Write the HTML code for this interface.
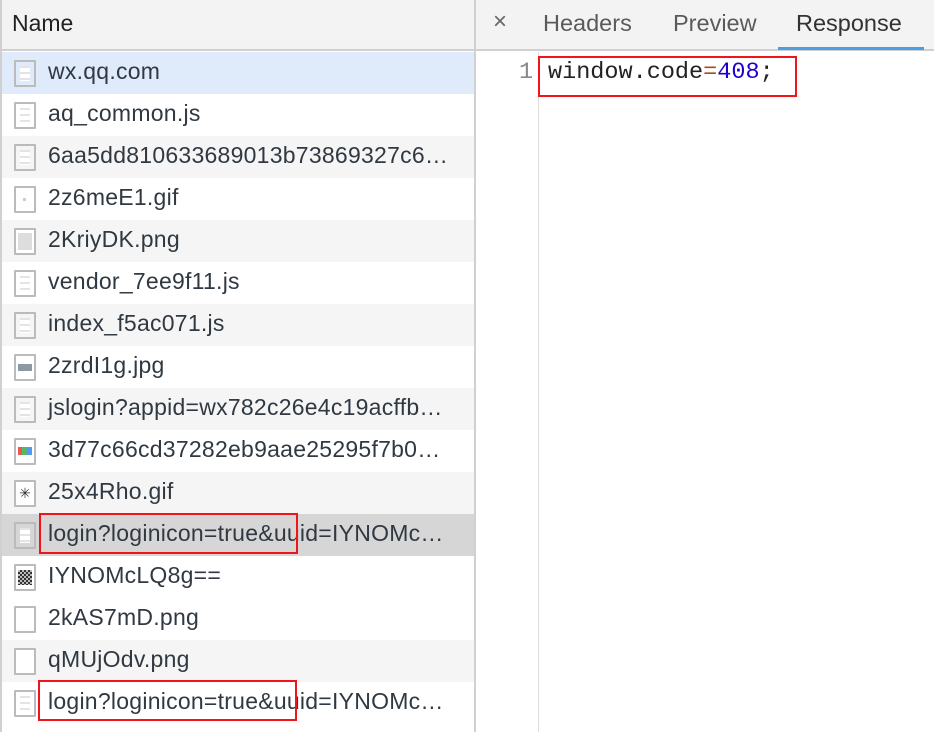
<!DOCTYPE html>
<html><head><style>
*{margin:0;padding:0;box-sizing:border-box}
body{width:934px;height:732px;overflow:hidden;background:#fff;font-family:"Liberation Sans",Helvetica,sans-serif;color:#303942;position:relative}
.lh{position:absolute;left:0;top:0;width:474px;height:51px;background:#f3f3f3;border-bottom:2px solid #d0d0d0;border-left:2px solid #d0d0d0}
.lh span{position:absolute;left:10px;top:10px;font-size:23px;color:#222}
.div{position:absolute;left:474px;top:0;width:2px;height:732px;background:#d0d0d0}
.lb{position:absolute;left:0;top:0;width:2px;height:732px;background:#d0d0d0}
.row{position:absolute;left:2px;width:472px;height:42px;font-size:23px;letter-spacing:0.25px;line-height:42px;white-space:nowrap}
.row .t{position:absolute;left:46px;top:-2px}
.ic{position:absolute;left:12px;top:8px;width:22px;height:27px;border:2px solid #bbb;background:#fff;border-radius:1px}
.ic.doc{background:repeating-linear-gradient(#fff 0 4px,#e4e4e4 4px 6px);background-clip:content-box;padding:4px 4px}
.rh{position:absolute;left:476px;top:0;width:458px;height:51px;background:#f3f3f3;border-bottom:2px solid #d0d0d0}
.tab{position:absolute;top:10px;font-size:23.5px;color:#5a5a5a}
.red{position:absolute;border:2px solid #f0141b;z-index:5}
</style></head><body>
<div class="lh"><span>Name</span></div>
<div class="lb"></div>
<div class="row" style="top:52px;background:#dfeafb"><div class="ic doc"></div><span class="t">wx.qq.com</span></div>
<div class="row" style="top:94px"><div class="ic doc"></div><span class="t">aq_common.js</span></div>
<div class="row" style="top:136px;background:#f5f5f5"><div class="ic doc"></div><span class="t">6aa5dd810633689013b73869327c6…</span></div>
<div class="row" style="top:178px"><div class="ic"><div style="position:absolute;left:7px;top:10px;width:3px;height:3px;background:#ccc"></div></div><span class="t">2z6meE1.gif</span></div>
<div class="row" style="top:220px;background:#f5f5f5"><div class="ic"><div style="position:absolute;left:2px;top:3px;width:14px;height:17px;background:#ddd"></div></div><span class="t">2KriyDK.png</span></div>
<div class="row" style="top:262px"><div class="ic doc"></div><span class="t">vendor_7ee9f11.js</span></div>
<div class="row" style="top:304px;background:#f5f5f5"><div class="ic doc"></div><span class="t">index_f5ac071.js</span></div>
<div class="row" style="top:346px"><div class="ic"><div style="position:absolute;left:2px;top:8px;width:14px;height:7px;background:#8a98a8"></div></div><span class="t">2zrdI1g.jpg</span></div>
<div class="row" style="top:388px;background:#f5f5f5"><div class="ic doc"></div><span class="t">jslogin?appid=wx782c26e4c19acffb…</span></div>
<div class="row" style="top:430px"><div class="ic"><div style="position:absolute;left:2px;top:7px;width:14px;height:8px;background:linear-gradient(90deg,#e55 0 30%,#5b5 30% 60%,#59e 60%)"></div></div><span class="t">3d77c66cd37282eb9aae25295f7b0…</span></div>
<div class="row" style="top:472px;background:#f5f5f5"><div class="ic" style="text-align:center;line-height:22px;font-size:14px;color:#333;letter-spacing:0">✳</div><span class="t">25x4Rho.gif</span></div>
<div class="row" style="top:514px;background:#d6d6d6"><div class="ic doc"></div><span class="t">login?loginicon=true&amp;uuid=IYNOMc…</span></div>
<div class="row" style="top:556px"><div class="ic"><div style="position:absolute;left:2px;top:4px;width:14px;height:15px;background:repeating-conic-gradient(#333 0 25%,#bbb 0 50%) 0 0/4px 4px"></div></div><span class="t">IYNOMcLQ8g==</span></div>
<div class="row" style="top:598px"><div class="ic"></div><span class="t">2kAS7mD.png</span></div>
<div class="row" style="top:640px;background:#f5f5f5"><div class="ic"></div><span class="t">qMUjOdv.png</span></div>
<div class="row" style="top:682px"><div class="ic doc"></div><span class="t">login?loginicon=true&amp;uuid=IYNOMc…</span></div>
<div class="div"></div>
<div class="rh">
<span class="tab" style="left:17px;top:8px;font-size:24px;color:#666">×</span>
<span class="tab" style="left:67px">Headers</span>
<span class="tab" style="left:197px">Preview</span>
<span class="tab" style="left:320px;color:#333">Response</span>
<div style="position:absolute;left:302px;top:47px;width:146px;height:3px;background:#4a9fe4"></div>
</div>
<div style="position:absolute;left:538px;top:52px;width:1px;height:680px;background:#ddd"></div>
<div style="position:absolute;left:519px;top:59px;font-family:'Liberation Mono',monospace;font-size:23.5px;color:#888">1</div>
<div style="position:absolute;left:548px;top:59px;font-family:'Liberation Mono',monospace;font-size:23.5px;color:#222">window.code<span style="color:#a05020">=</span><span style="color:#1c00cf">408</span>;</div>
<div class="red" style="left:538px;top:56px;width:259px;height:41px"></div>
<div class="red" style="left:39px;top:513px;width:259px;height:41px"></div>
<div class="red" style="left:38px;top:680px;width:259px;height:41px"></div>
</body></html>
